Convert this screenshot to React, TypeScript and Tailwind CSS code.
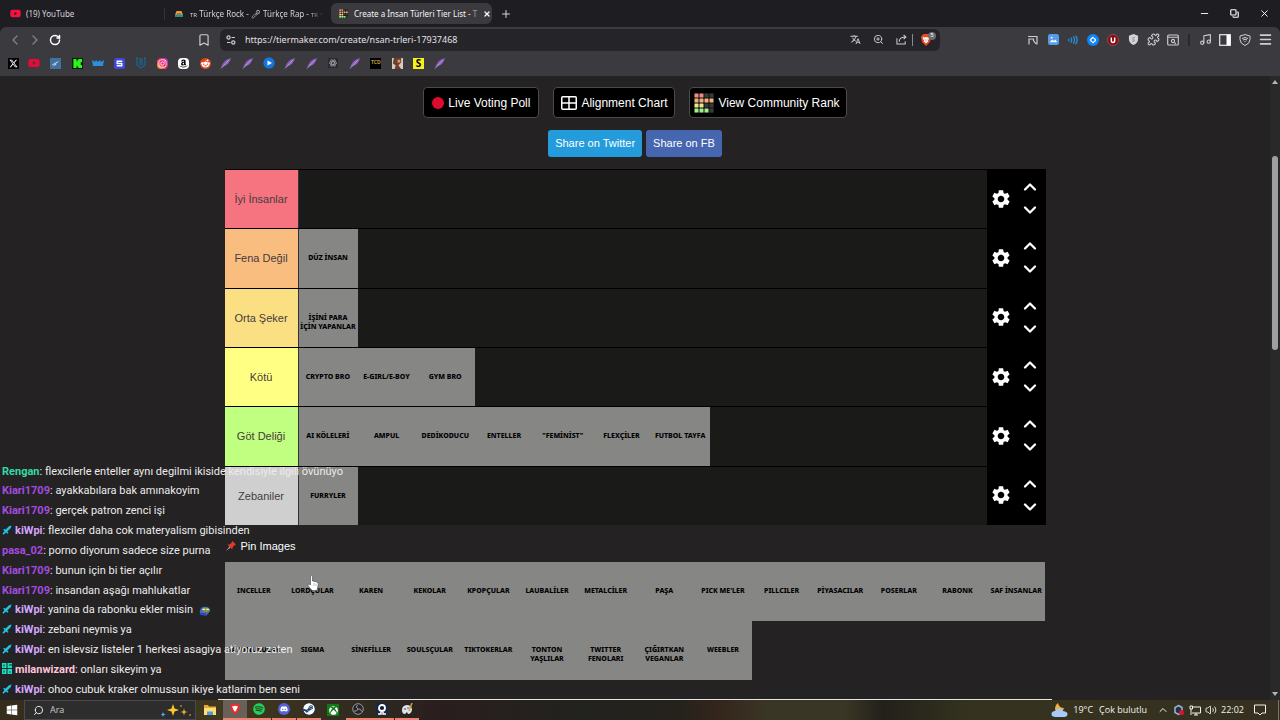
import type { ReactNode } from "react";
import {
  FaAmazon, FaDiscord, FaInstagram, FaRedditAlien, FaSpotify, FaSteam,
  FaWindows, FaXTwitter, FaXbox, FaYoutube,
} from "react-icons/fa6";
import { MdSettings, MdTranslate } from "react-icons/md";
import {
  Bookmark, ChevronLeft, ChevronRight, ChevronUp, ChevronDown, Copy, Menu, Minus,
  Music, Plus, Puzzle, RotateCw, Search, Volume2, X, ZoomIn,
} from "lucide-react";

const tiers = [
  { name: "İyi İnsanlar", color: "bg-[#f67480]", items: [] },
  { name: "Fena Değil", color: "bg-[#f9bd80]", items: ["DÜZ İNSAN"] },
  { name: "Orta Şeker", color: "bg-[#fbe083]", items: ["İŞİNİ PARA\nİÇİN YAPANLAR"] },
  { name: "Kötü", color: "bg-[#feff83]", items: ["CRYPTO BRO", "E-GIRL/E-BOY", "GYM BRO"] },
  {
    name: "Göt Deliği",
    color: "bg-[#c0ff80]",
    items: ["AI KÖLELERİ", "AMPUL", "DEDİKODUCU", "ENTELLER", "\"FEMİNİST\"", "FLEXÇİLER", "FUTBOL TAYFA"],
  },
  { name: "Zebaniler", color: "bg-[#d0cfd0]", items: ["FURRYLER"] },
];

const trackWidths: Record<number, string> = {
  1: "w-[59px] grid-cols-1",
  3: "w-[176px] grid-cols-3",
  7: "w-[411px] grid-cols-7",
};

const pool = [
  "INCELLER", "LORDÇULAR", "KAREN", "KEKOLAR", "KPOPÇULAR", "LAUBALİLER", "METALCİLER", "PAŞA", "PICK ME'LER",
  "PILLCILER", "PİYASACILAR", "POSERLAR", "RABONK", "SAF İNSANLAR", "SAVUNUCULAR", "SIGMA", "SİNEFİLLER",
  "SOULSÇULAR", "TIKTOKERLAR", "TONTON\nYAŞLILAR", "TWITTER\nFENOLARI", "ÇIĞIRTKAN\nVEGANLAR", "WEEBLER",
];

type Message = { user: string; color: string; text: string; badge?: "sword" | "dash"; emote?: boolean };

const messages: Message[] = [
  { user: "Rengan", color: "text-[#35d9a6]", text: "flexcilerle enteller aynı degilmi ikiside kendisiyle ilgili övünüyo" },
  { user: "Kiari1709", color: "text-[#a64be0]", text: "ayakkabılara bak amınakoyim" },
  { user: "Kiari1709", color: "text-[#a64be0]", text: "gerçek patron zenci işi" },
  { user: "kiWpi", color: "text-[#d3a6ff]", text: "flexciler daha cok materyalism gibisinden", badge: "sword" },
  { user: "pasa_02", color: "text-[#a64be0]", text: "porno diyorum sadece size purna" },
  { user: "Kiari1709", color: "text-[#a64be0]", text: "bunun için bi tier açılır" },
  { user: "Kiari1709", color: "text-[#a64be0]", text: "insandan aşağı mahlukatlar" },
  { user: "kiWpi", color: "text-[#d3a6ff]", text: "yanina da rabonku ekler misin", badge: "sword", emote: true },
  { user: "kiWpi", color: "text-[#d3a6ff]", text: "zebani neymis ya", badge: "sword" },
  { user: "kiWpi", color: "text-[#d3a6ff]", text: "en islevsiz listeler 1 herkesi asagiya atiyoruz zaten", badge: "sword" },
  { user: "milanwizard", color: "text-[#ffc4dc]", text: "onları sikeyim ya", badge: "dash" },
  { user: "kiWpi", color: "text-[#d3a6ff]", text: "ohoo cubuk kraker olmussun ikiye katlarim ben seni", badge: "sword" },
];

function TierLogo({ className }: { className: string }) {
  const rows = [
    ["#f08a8a", "#f08a8a", "#3a3a3a", "#3a3a3a"],
    ["#f2b07c", "#f2b07c", "#f2b07c", "#f2b07c"],
    ["#f3e58a", "#f3e58a", "#3a3a3a", "#3a3a3a"],
    ["#9df08a", "#9df08a", "#9df08a", "#3a3a3a"],
  ];
  return (
    <svg viewBox="0 0 20 20" className={className} aria-hidden="true">
      <rect width="20" height="20" fill="#111" />
      {rows.map((row, y) =>
        row.map((fill, x) => <rect key={`${x}-${y}`} x={x * 5 + 0.5} y={y * 5 + 0.5} width="4" height="4" rx="0.5" fill={fill} />),
      )}
    </svg>
  );
}

function Feather() {
  return (
    <svg viewBox="0 0 12 12" className="size-3" aria-hidden="true">
      <path d="M1.500 10.500 C2 6.500 5 2.500 11 1 C10 5 8 8 3.500 9.300 Z" fill="#8a5cb8" />
      <path d="M1 11.500 L9 3" stroke="#d3b5ee" strokeWidth="0.7" />
    </svg>
  );
}

function EmoteFace({ className }: { className: string }) {
  return (
    <svg viewBox="0 0 14 12" className={className} aria-hidden="true">
      <path d="M1 6 Q2 .500 7 1 Q13 1 13 6 L9 11 Q3 12 1 8" fill="#3c6fb8" />
      <path d="M3 5 Q5 1 9 2 Q13 3 12.500 6 Q8 8 3 5" fill="#6d9c4a" />
      <path d="M4 4 h3 M8.500 4 h3" stroke="#f4e9c9" strokeWidth="1.500" />
      <path d="M5 7 h6" stroke="#c56a4a" strokeWidth="1.300" />
      <path d="M1 9.500 h7" stroke="#2a3fe0" strokeWidth="2.500" />
    </svg>
  );
}

function BraveShield({ className }: { className: string }) {
  return (
    <svg viewBox="0 0 12 12" className={className} aria-hidden="true">
      <path d="M3.500 0h5L11 2.500 10 8 6 12 2 8 1 2.500z" fill="#ea4b25" />
      <path d="M3 3l1.500.500L6 3l1.500.500L9 3l.300 1.500L7.800 6.500 8 7.700 6 9.300 4 7.700l.200-1.200L2.700 4.500z" fill="#fff" />
      <path d="M4.500 5l1 .600M7.500 5l-1 .600M6 6v1.300" stroke="#ea4b25" strokeWidth="0.600" />
    </svg>
  );
}

function Badge({ kind }: { kind: "sword" | "dash" }) {
  if (kind === "dash") {
    return (
      <svg viewBox="0 0 10 11" className="mr-[3px] inline-block h-[11px] w-2.5 align-[-1px]" aria-hidden="true">
        <path d="M0 0h4.500v5H0zM5.500 0H10v5H5.500zM0 6h4.500v5H0zM5.500 6H10v5H5.500z" fill="#17e0c2" />
        <path d="M1.500 1.500h1v2h-1zM7 1.500h3v1H7zM1.500 7.500h1v2h-1zM7 8.500h1.500v1H7z" fill="#232122" />
      </svg>
    );
  }
  return (
    <svg viewBox="0 0 10 10" className="mr-[3px] inline-block size-2.5 align-[-1px]" aria-hidden="true">
      <path d="M9.500 .500 L8.800 3 L5.300 6.500 L6.500 8 L5.500 8.800 L4 7.600 L1.500 9.800 L0.400 8.700 L2.500 6.200 L1.200 4.600 L2.200 3.700 L3.400 4.700 L7 1.200 Z" fill="#22c3e6" />
    </svg>
  );
}

function Tile({ label }: { label: string }) {
  return (
    <div className="flex justify-center bg-[#868685] pt-6 text-center font-['Noto_Sans',sans-serif] text-[7px] leading-[9px] font-extrabold whitespace-pre text-black">
      {label}
    </div>
  );
}

function ToolButton({ label, children }: { label: string; children: ReactNode }) {
  return (
    <button type="button" aria-label={label} className="flex size-3 shrink-0 items-center justify-center">
      {children}
    </button>
  );
}

function TabStrip() {
  return (
    <div className="flex h-[27px] items-center bg-[#1e1d22] text-[8px] text-[#d5d4d8]">
      <button type="button" className="ml-2.5 flex w-[155px] items-center gap-[5px] border-r border-[#35343a]">
        <FaYoutube className="size-[11px] text-[#f5133d]" />
        (19) YouTube
      </button>
      <button type="button" className="flex w-[166px] items-center gap-[7px] pl-2.5 whitespace-nowrap">
        <svg viewBox="0 0 8 7" className="h-[7px] w-2 shrink-0" aria-hidden="true"><path d="M0 5l1.500-4h5L8 5z" fill="#e2a33e" /><path d="M2 3h4v1.500H2z" fill="#d4594c" /><path d="M0 4.500h8V7H0z" fill="#2a8f84" /></svg>
        <span className="mask-r-from-90%"><span className="text-[6px]">TR</span> Türkçe Rock - 🎤︎ Türkçe Rap - <span className="text-[6px]">TR T</span></span>
      </button>
      <div className="flex h-[21px] w-[161px] items-center gap-1.5 rounded-md bg-[#3b3a3e] px-2 text-[#f6f5f8]">
        <TierLogo className="size-[9px] shrink-0" />
        <span className="flex-1 whitespace-nowrap">Create a İnsan Türleri Tier List - <span className="opacity-50">T</span></span>
        <button type="button" aria-label="Close tab"><X className="size-2" strokeWidth={4} /></button>
      </div>
      <button type="button" aria-label="New tab" className="ml-2"><Plus className="size-3" /></button>
      <div className="mr-2.5 ml-auto flex items-center gap-5 text-white">
        <button type="button" aria-label="Minimise"><Minus className="size-[11px]" /></button>
        <button type="button" aria-label="Restore"><Copy className="size-[9px] -scale-x-100 rotate-90" strokeWidth={3} /></button>
        <button type="button" aria-label="Close"><X className="size-[11px]" /></button>
      </div>
    </div>
  );
}

function Toolbar() {
  return (
    <div className="flex h-[25px] items-center rounded-t-md px-[9px] text-[#cfced2]">
      <div className="flex w-[189px] items-center gap-2">
        <ToolButton label="Back"><ChevronLeft className="size-4 shrink-0 text-[#828187]" strokeWidth={2} /></ToolButton>
        <ToolButton label="Forward"><ChevronRight className="size-4 shrink-0 text-[#828187]" strokeWidth={2} /></ToolButton>
        <ToolButton label="Reload"><RotateCw className="size-3 shrink-0 text-white" strokeWidth={3} /></ToolButton>
      </div>
      <ToolButton label="Bookmark"><Bookmark className="size-3.5 shrink-0" /></ToolButton>
      <div className="ml-2.5 flex h-[22px] min-w-0 flex-1 items-center rounded-md bg-[#252429] pr-2 pl-1.5">
        <svg viewBox="0 0 10 10" className="size-2.5 shrink-0" fill="none" stroke="currentColor" strokeWidth="1.200" aria-hidden="true">
          <circle cx="2.500" cy="2.500" r="1.600" /><path d="M5.500 2.500H9M1 7.500h3.500" /><circle cx="7.300" cy="7.500" r="1.600" />
        </svg>
        <input
          aria-label="Address"
          defaultValue="https://tiermaker.com/create/nsan-trleri-17937468"
          className="ml-[9px] min-w-0 flex-1 bg-transparent text-[9px] text-[#e2e1e5] outline-none"
        />
        <div className="flex items-center gap-[11px]">
          <ToolButton label="Translate"><MdTranslate className="size-[11px]" /></ToolButton>
          <ToolButton label="Zoom"><ZoomIn className="size-[11px]" /></ToolButton>
          <ToolButton label="Share">
            <svg viewBox="0 0 12 12" className="size-[11px]" fill="none" stroke="currentColor" strokeWidth="1.100" aria-hidden="true">
              <path d="M1 4.500V11h9V8M3.500 8.500C3.500 5 6 3.300 10.500 3.300M8.300 1l2.500 2.300L8.300 5.600" />
            </svg>
          </ToolButton>
        </div>
        <div className="relative ml-[5px] flex border-l border-[#8b8a90] pl-[7px]">
          <BraveShield className="size-3" />
          <span className="absolute -top-0.5 -right-1 flex size-2 items-center justify-center rounded-full bg-[#6d6c72] text-[6px] text-white">5</span>
        </div>
      </div>
      <div className="ml-[87px] flex items-center gap-2">
        <ToolButton label="Notes">
          <svg viewBox="0 0 10 10" className="size-2.5" fill="none" stroke="currentColor" strokeWidth="1.200" aria-hidden="true"><path d="M0 1.500h9v8M1 9.500V4h4.500v1.500L8 9" /></svg>
        </ToolButton>
        <ToolButton label="Images">
          <svg viewBox="0 0 12 12" className="size-[11px]" aria-hidden="true"><rect width="12" height="12" rx="2.500" fill="#559be8" /><path d="M2 9l2.500-3 2 1.500L8 6l2 3z" fill="#fff" /><circle cx="4" cy="4" r="1" fill="#fff" /></svg>
        </ToolButton>
        <ToolButton label="Sound">
          <svg viewBox="0 0 12 12" className="size-2.5" fill="none" stroke="#2891e0" strokeWidth="1.500" strokeLinecap="round" aria-hidden="true"><path d="M1 5v2M3.500 3.500q2 2.500 0 5M6.500 2.300q3 3.700 0 7.400M9.300 1.300q3.500 4.700 0 9.400" /></svg>
        </ToolButton>
        <ToolButton label="Music finder">
          <svg viewBox="0 0 12 12" className="size-3" aria-hidden="true"><circle cx="6" cy="6" r="6" fill="#0d86f5" /><path d="M6.500 3L4 5q-1 1 0 2l1.500.800M5.500 9L8 7q1-1 0-2L6.500 4.200" fill="none" stroke="#fff" strokeWidth="1.300" /></svg>
        </ToolButton>
        <ToolButton label="Blocker">
          <svg viewBox="0 0 12 12" className="size-3" aria-hidden="true"><circle cx="6" cy="6" r="5.500" fill="#8a0710" stroke="#b97a7d" strokeWidth="0.5" /><path d="M4.300 3.500v3q0 2 1.700 2t1.700-2v-3" fill="none" stroke="#fff" strokeWidth="1.500" /></svg>
        </ToolButton>
        <ToolButton label="Guard">
          <svg viewBox="0 0 12 12" className="size-[11px]" aria-hidden="true"><path d="M6 0l5 2v3.500Q11 10 6 12 1 10 1 5.500V2z" fill="#cfd2d6" /><path d="M7.500 4Q5 3.500 5 5t2 1.500Q7 8.500 4.500 8" fill="none" stroke="#8b8e94" /></svg>
        </ToolButton>
        <ToolButton label="Extensions"><Puzzle className="size-[13px] shrink-0" /></ToolButton>
        <ToolButton label="Find in page">
          <svg viewBox="0 0 12 12" className="size-3" fill="none" stroke="currentColor" strokeWidth="1.100" aria-hidden="true"><rect x="0.700" y="1" width="10.600" height="10" rx="1" /><path d="M1 3.300h10M7.500 8.500l1.300 1.300" /><circle cx="6" cy="7" r="1.600" /></svg>
        </ToolButton>
        <span className="mx-px h-3 w-0.5 bg-[#29282d]" />
        <ToolButton label="Music"><Music className="size-[13px] shrink-0" /></ToolButton>
        <ToolButton label="Sidebar">
          <svg viewBox="0 0 12 12" className="size-3" aria-hidden="true"><rect x="0.700" y="0.700" width="10.600" height="10.600" fill="none" stroke="#e8e8ea" strokeWidth="1.200" /><rect x="7.500" y="0.500" width="4" height="11" fill="#fff" /></svg>
        </ToolButton>
        <ToolButton label="VPN">
          <svg viewBox="0 0 12 12" className="size-3" fill="none" stroke="currentColor" aria-hidden="true"><path d="M6 .600L11 2v3.500Q11 9.500 6 11.500 1 9.500 1 5.500V2z" /><path d="M3 4.500q3-2 6 0M4 6q2-1.500 4 0M5.500 7.500h1" /></svg>
        </ToolButton>
        <ToolButton label="Menu"><Menu className="size-[15px] shrink-0" strokeWidth={2.5} /></ToolButton>
      </div>
    </div>
  );
}

function Bookmarks() {
  const box = "flex size-[11px] items-center justify-center";
  const entries: [string, ReactNode][] = [
    ["X", <span className={`${box} bg-black text-white`}><FaXTwitter className="size-[9px]" /></span>],
    ["YouTube", <FaYoutube className="size-3 text-[#e60b3a]" />],
    ["Plane", <svg viewBox="0 0 12 12" className="size-[11px]"><rect width="12" height="12" fill="#41719f" /><path d="M2.500 7.500L9 4M4 8.500l3-2" stroke="#d8e7f6" strokeWidth="1" /></svg>],
    ["Kick", <svg viewBox="0 0 12 12" className="size-[11px]"><rect width="12" height="12" fill="#071806" /><path d="M1.500 1h3.500v2.500h1V2h1V1h4v3.500H9.500v3H11V11H7v-1H6V8.500H5V11H1.500z" fill="#2cf51c" /></svg>],
    ["Crown", <svg viewBox="0 0 12 12" className="size-3"><path d="M0 3l3 2 1-2 2 2 2-2 1 2 3-2-1 6H1z" fill="#2c8fe0" /></svg>],
    ["S", <svg viewBox="0 0 12 12" className="size-[11px]"><rect width="12" height="12" rx="2" fill="#3f46d8" /><path d="M9 3.500H3.500V6h5v2.500H3" stroke="#fff" strokeWidth="1.500" fill="none" /></svg>],
    ["U", <svg viewBox="0 0 12 12" className="size-3"><path d="M1 1h2M2 1v7l4 3 4-3V1M9 1h2M5 1v7M7 1v7" stroke="#1c638d" strokeWidth="1.300" fill="none" /></svg>],
    ["Instagram", <span className={`${box} rounded-sm bg-linear-to-tr from-[#f9a72b] via-[#ee2366] to-[#b52bd0] text-white`}><FaInstagram className="size-[9px]" /></span>],
    ["Amazon", <span className={`${box} rounded-sm bg-white text-black`}><FaAmazon className="size-[9px]" /></span>],
    ["Reddit", <span className={`${box} rounded-full bg-[#e5431c] text-white`}><FaRedditAlien className="size-[9px]" /></span>],
    ["Feather 1", <Feather />],
    ["Feather 2", <Feather />],
    ["Player", <svg viewBox="0 0 12 12" className="size-3"><circle cx="6" cy="6" r="5.700" fill="#1476df" /><path d="M4.500 3.500L9 6 4.500 8.500z" fill="#fff" /></svg>],
    ["Feather 3", <Feather />],
    ["Feather 4", <Feather />],
    ["Atom", <svg viewBox="0 0 12 12" className="size-2.5" fill="none" stroke="#9a999e"><rect width="12" height="12" fill="#2b2a2e" stroke="none" /><ellipse cx="6" cy="6" rx="4.500" ry="1.700" /><ellipse cx="6" cy="6" rx="4.500" ry="1.700" transform="rotate(60 6 6)" /><ellipse cx="6" cy="6" rx="4.500" ry="1.700" transform="rotate(120 6 6)" /></svg>],
    ["Feather 5", <Feather />],
    ["TCD", <span className={`${box} bg-black text-[5px] font-bold text-[#c09a35]`}>TCD</span>],
    ["Portrait", <svg viewBox="0 0 12 12" className="size-[11px]"><rect width="12" height="12" fill="#d9c9bd" /><path d="M2 0h8v5L7 8l3 4H3l1-4-3-2z" fill="#6d3f2a" /><path d="M6 2h3v3H6z" fill="#d79b76" /></svg>],
    ["S yellow", <span className={`${box} bg-[#f7f11b] text-[10px] font-bold text-black`}>S</span>],
    ["Feather 6", <Feather />],
  ];
  return (
    <nav className="flex h-6 w-[446px] items-center justify-between pb-0.5 pl-[7px]" aria-label="Bookmarks">
      {entries.map(([name, icon]) => (
        <a key={name} href="#" aria-label={name} className="flex w-3 shrink-0 items-center justify-center">
          {icon}
        </a>
      ))}
    </nav>
  );
}

function TierTable() {
  return (
    <div className="grid min-h-[356px] auto-rows-fr bg-black">
      {tiers.map((tier) => (
        <section key={tier.name} className="flex">
          <div className="flex flex-1 border-t border-black bg-[#1a1a18]">
            <h2 className={`flex w-[74px] items-center justify-center border-r border-[#333] text-[11px] text-[#453c3c] ${tier.color}`}>{tier.name}</h2>
            <div className={`grid ${trackWidths[tier.items.length] ?? ""}`}>
              {tier.items.map((item) => <Tile key={item} label={item} />)}
            </div>
          </div>
          <div className="flex w-[59px] items-center gap-2 pl-[3px] text-white">
            <button type="button" aria-label={`Settings for ${tier.name}`}><MdSettings className="size-[22px]" /></button>
            <div className="flex flex-col gap-[3px]">
              <button type="button" aria-label={`Move ${tier.name} up`}><ChevronUp className="size-5" strokeWidth={2.75} /></button>
              <button type="button" aria-label={`Move ${tier.name} down`}><ChevronDown className="size-5" strokeWidth={2.75} /></button>
            </div>
          </div>
        </section>
      ))}
    </div>
  );
}

function Chat() {
  return (
    <ul className="absolute bottom-0 left-0.5 grid h-[238px] auto-rows-fr font-[Roboto,'Noto_Sans',sans-serif] text-[11px] whitespace-nowrap text-[#ececec]">
      {messages.map((m) => (
        <li key={m.user + m.text} className="flex items-center">
          <p>
            {m.badge && <Badge kind={m.badge} />}
            <b className={m.color}>{m.user}</b>: {m.text}
            {m.emote && <EmoteFace className="ml-1.5 inline-block size-3" />}
          </p>
        </li>
      ))}
    </ul>
  );
}

function Page() {
  const dark = "flex h-[31px] items-center gap-1 rounded border border-[#4b4b4b] bg-black text-[12px] text-white";
  return (
    <div className="relative flex flex-1 bg-[#242223] font-['Liberation_Sans',Arial,sans-serif]">
      <main className="flex flex-1 flex-col items-center pt-[11px]">
        <div className="flex gap-[14px]">
          <button type="button" className={`${dark} px-2`}>
            <span className="size-3 rounded-full bg-[#dc0c2c]" />Live Voting Poll
          </button>
          <button type="button" className={`${dark} px-[7px]`}>
            <svg viewBox="0 0 16 14" className="h-3.5 w-4" fill="none" stroke="#fff" strokeWidth="1.500" aria-hidden="true"><rect x="0.750" y="0.750" width="14.500" height="12.500" rx="1" /><path d="M8 1v12M1 7h14" /></svg>
            Alignment Chart
          </button>
          <button type="button" className={`${dark} pr-1.5 pl-1`}>
            <TierLogo className="size-5" />View Community Rank
          </button>
        </div>
        <div className="mt-3 flex gap-1 text-[11px] text-white">
          <a href="#" className="flex h-[27px] items-center rounded-[3px] bg-[#249cdc] px-[7px]">Share on Twitter</a>
          <a href="#" className="flex h-[27px] items-center rounded-[3px] bg-[#4766b0] px-[7px]">Share on FB</a>
        </div>
        <div className="mt-3 w-[821px]">
          <TierTable />
          <button type="button" className="mt-[13px] flex h-4 items-center gap-1 text-[11px] text-white">
            <svg viewBox="0 0 12 12" className="size-3" aria-hidden="true"><path d="M1 11l3.500-4.500 1 1z" fill="#aeb4ba" /><path d="M7.500 1L11 4.500 9.500 5.300 7.800 7 7.300 9.500 2.500 4.700 5 4.200 6.700 2.500z" fill="#e03a2e" /></svg>
            Pin Images
          </button>
          <div className="mt-2 grid auto-rows-[59px] grid-cols-14">
            {pool.map((p) => <Tile key={p} label={p} />)}
          </div>
        </div>
      </main>
      <div className="flex w-2.5 flex-col items-center bg-[#2a292a] py-1" aria-hidden="true">
        <svg viewBox="0 0 6 4" className="h-1 w-1.5"><path d="M0 4L3 0 6 4z" fill="#b5b5b5" /></svg>
        <div className="mt-[72px] h-[194px] w-1.5 rounded-full bg-[#a09fa0]" />
        <svg viewBox="0 0 6 4" className="mt-auto h-1 w-1.5"><path d="M0 0L3 4 6 0z" fill="#b5b5b5" /></svg>
      </div>
      <svg viewBox="0 0 12 17" className="absolute top-[499px] left-[307px] h-[17px] w-3" aria-hidden="true">
        <path d="M3.500 1Q5 0 5.500 1.500V6l4.500 1Q11.500 7.500 11.300 9.500L10 15.500H5L1 10.500Q.500 9 2 9l1.500 1z" fill="#fff" stroke="#444" strokeWidth="0.600" />
        <path d="M7 8v3M9 8.500V11" stroke="#999" strokeWidth="0.600" />
      </svg>
      <div className="absolute bottom-0 left-[17%] h-px w-[65.200%] bg-[#e6e6e2]" />
      <Chat />
    </div>
  );
}

function Taskbar() {
  const apps: [string, string, ReactNode][] = [
    ["Files", "", <svg viewBox="0 0 12 12" className="size-3"><path d="M0 1h4l1 1.500h7V11H0z" fill="#e9a934" /><path d="M0 4h12v7H0z" fill="#ffdd77" /><path d="M3 11V7.500h6V11z" fill="#4b9de0" /></svg>],
    ["Brave", "bg-[#686157] border-b-2 border-[#f08375]", <svg viewBox="0 0 12 12" className="size-3"><path d="M2 1h8l1 2-1.500 5L6 12 2.500 8 1 3z" fill="#e42f34" /><path d="M3 3.500l3-.800 3 .800L7.300 7 6 9 4.700 7z" fill="#fff" /></svg>],
    ["Spotify", "border-b-2 border-[#f08375]", <FaSpotify className="size-3 text-[#1fd25c]" />],
    ["Discord", "border-b-2 border-[#f08375]", <span className="flex size-3 items-center justify-center rounded-full bg-[#5661d8] text-white"><FaDiscord className="size-2" /></span>],
    ["Steam", "border-b-2 border-[#f08375]", <FaSteam className="size-3 rounded-full bg-[#153f70] text-white" />],
    ["Xbox", "", <span className="flex size-3 items-center justify-center bg-[#117a18] text-white"><FaXbox className="size-[9px]" /></span>],
    ["Recorder", "border-b-2 border-[#f08375]", <svg viewBox="0 0 12 12" className="size-3" fill="none" stroke="#999"><circle cx="6" cy="6" r="5.300" fill="#26242a" /><path d="M6 6q-3-2-.500-4M6 6q3.500-.500 3.500 2.500M6 6q-1 3-4 2" /></svg>],
    ["Camera", "border-b-2 border-[#f08375]", <svg viewBox="0 0 12 12" className="size-3"><rect width="12" height="12" fill="#17284d" /><circle cx="6" cy="5" r="3" fill="#111a30" stroke="#fff" strokeWidth="1.800" /><path d="M2 11h3V9M10 11H7V9" stroke="#fff" strokeWidth="1.500" fill="none" /></svg>],
    ["Paint", "border-b-2 border-[#f08375]", <svg viewBox="0 0 12 12" className="size-3"><path d="M1 7q0-5 6-5 4 1 4 5-1 4-4 4l-1-2-2 2Q1 11 1 7" fill="#d6e5ee" /><circle cx="4" cy="6" r="1" fill="#e34545" /><circle cx="7" cy="5" r="1" fill="#3f9ee3" /><path d="M8 8l3-8" stroke="#e99b2a" strokeWidth="1.500" /></svg>],
  ];
  return (
    <footer className="flex h-5 items-stretch bg-[linear-gradient(90deg,#352c1c_0%,#40381f_18%,#2e2820_30%,#2a1e1e_34%,#22221f_45%,#25221c_53%,#33251b_56%,#3a3626_60%,#3a3625_66%,#23201a_69%,#35331f_76%,#353020_100%)] font-['Open_Sans','Noto_Sans',sans-serif] text-[9px] text-[#f2f2ee]">
      <button type="button" aria-label="Start" className="flex w-6 items-center justify-center text-white"><FaWindows className="size-3" /></button>
      <label className="flex w-[172px] items-center gap-1.5 border border-[#4a4a4a] bg-[#2d2d2d] pl-2">
        <Search className="size-[11px] shrink-0 -scale-x-100" />
        <input aria-label="Search" placeholder="Ara" className="w-0 flex-1 bg-transparent placeholder:text-[#c9c9c9]" />
        <svg viewBox="0 0 30 14" className="mr-1 h-3.5 w-[30px]" aria-hidden="true">
          <path d="M12 1l1.500 4.500L18 7l-4.500 1.500L12 13l-1.500-4.500L6 7l4.500-1.500z" fill="#ffc72e" />
          <path d="M23 5.500l.800 2.700L26.500 9l-2.700.800L23 12.500l-.800-2.700L19.500 9l2.700-.800z" fill="#f5b92a" />
          <path d="M2 9l.700 1.800L4.500 11.500l-1.800.700L2 14l-.700-1.800L0 11.500l1.300-.700z" fill="#4cb6ee" />
          <circle cx="20" cy="3" r="1" fill="#d06b35" /><circle cx="29" cy="12" r="1" fill="#d06b35" />
        </svg>
      </label>
      <div className="ml-0.5 flex w-[221px] justify-between">
        {apps.map(([name, style, icon]) => (
          <button key={name} type="button" aria-label={name} className={`flex w-6 items-center justify-center ${style}`}>{icon}</button>
        ))}
      </div>
      <div className="ml-auto flex items-center gap-1">
        <svg viewBox="0 0 17 16" className="mr-px h-4 w-[17px]" aria-hidden="true"><path d="M7 1q1 5 6 5-1 4-5 4T4 6q0-3 3-5" fill="#f3b13c" /><path d="M4 15q-4-.500-3.500-3.500Q1 9 4 9q2-3.500 5.500-2Q12 8 12 9q5 .500 4.500 3.500Q16 15 13 15z" fill="#a9c9f7" /></svg>
        <span>19°C</span>
        <span className="mr-1.5 ml-0.5">Çok bulutlu</span>
        <button type="button" aria-label="Hidden icons"><ChevronUp className="size-3" /></button>
        <svg viewBox="0 0 12 12" className="size-3" aria-hidden="true"><path d="M5.500 1.500L9 3.500v5l-3.500 2L2 8.500v-5z" fill="#22314b" stroke="#9fb4cf" strokeWidth="1.500" /><circle cx="8.500" cy="8.500" r="2.500" fill="#e1102d" /></svg>
        <svg viewBox="0 0 12 11" className="h-[11px] w-3" fill="none" stroke="currentColor" aria-hidden="true"><path d="M4 2h7.500v6H3M5 10h4M7 8v2M1 1h2.500v3H1zM2 4v6" /></svg>
        <Volume2 className="size-3" strokeWidth={1.75} />
        <span className="mr-1.5">22:02</span>
        <button type="button" aria-label="Notifications" className="mr-2">
          <svg viewBox="0 0 12 12" className="size-3" fill="none" stroke="currentColor" aria-hidden="true"><path d="M.500 1h11v8H8L6 11 4 9H.500z" /></svg>
        </button>
        <span className="h-5 w-0.5 border-l border-[#77756a]" />
      </div>
    </footer>
  );
}

export default function App() {
  return (
    <div className="flex min-h-screen flex-col overflow-hidden bg-[#1e1d22]">
      <header className="font-['Noto_Sans',sans-serif]">
        <TabStrip />
        <div className="rounded-t-md bg-[#3b3a3e]">
          <Toolbar />
          <Bookmarks />
        </div>
      </header>
      <Page />
      <Taskbar />
    </div>
  );
}
